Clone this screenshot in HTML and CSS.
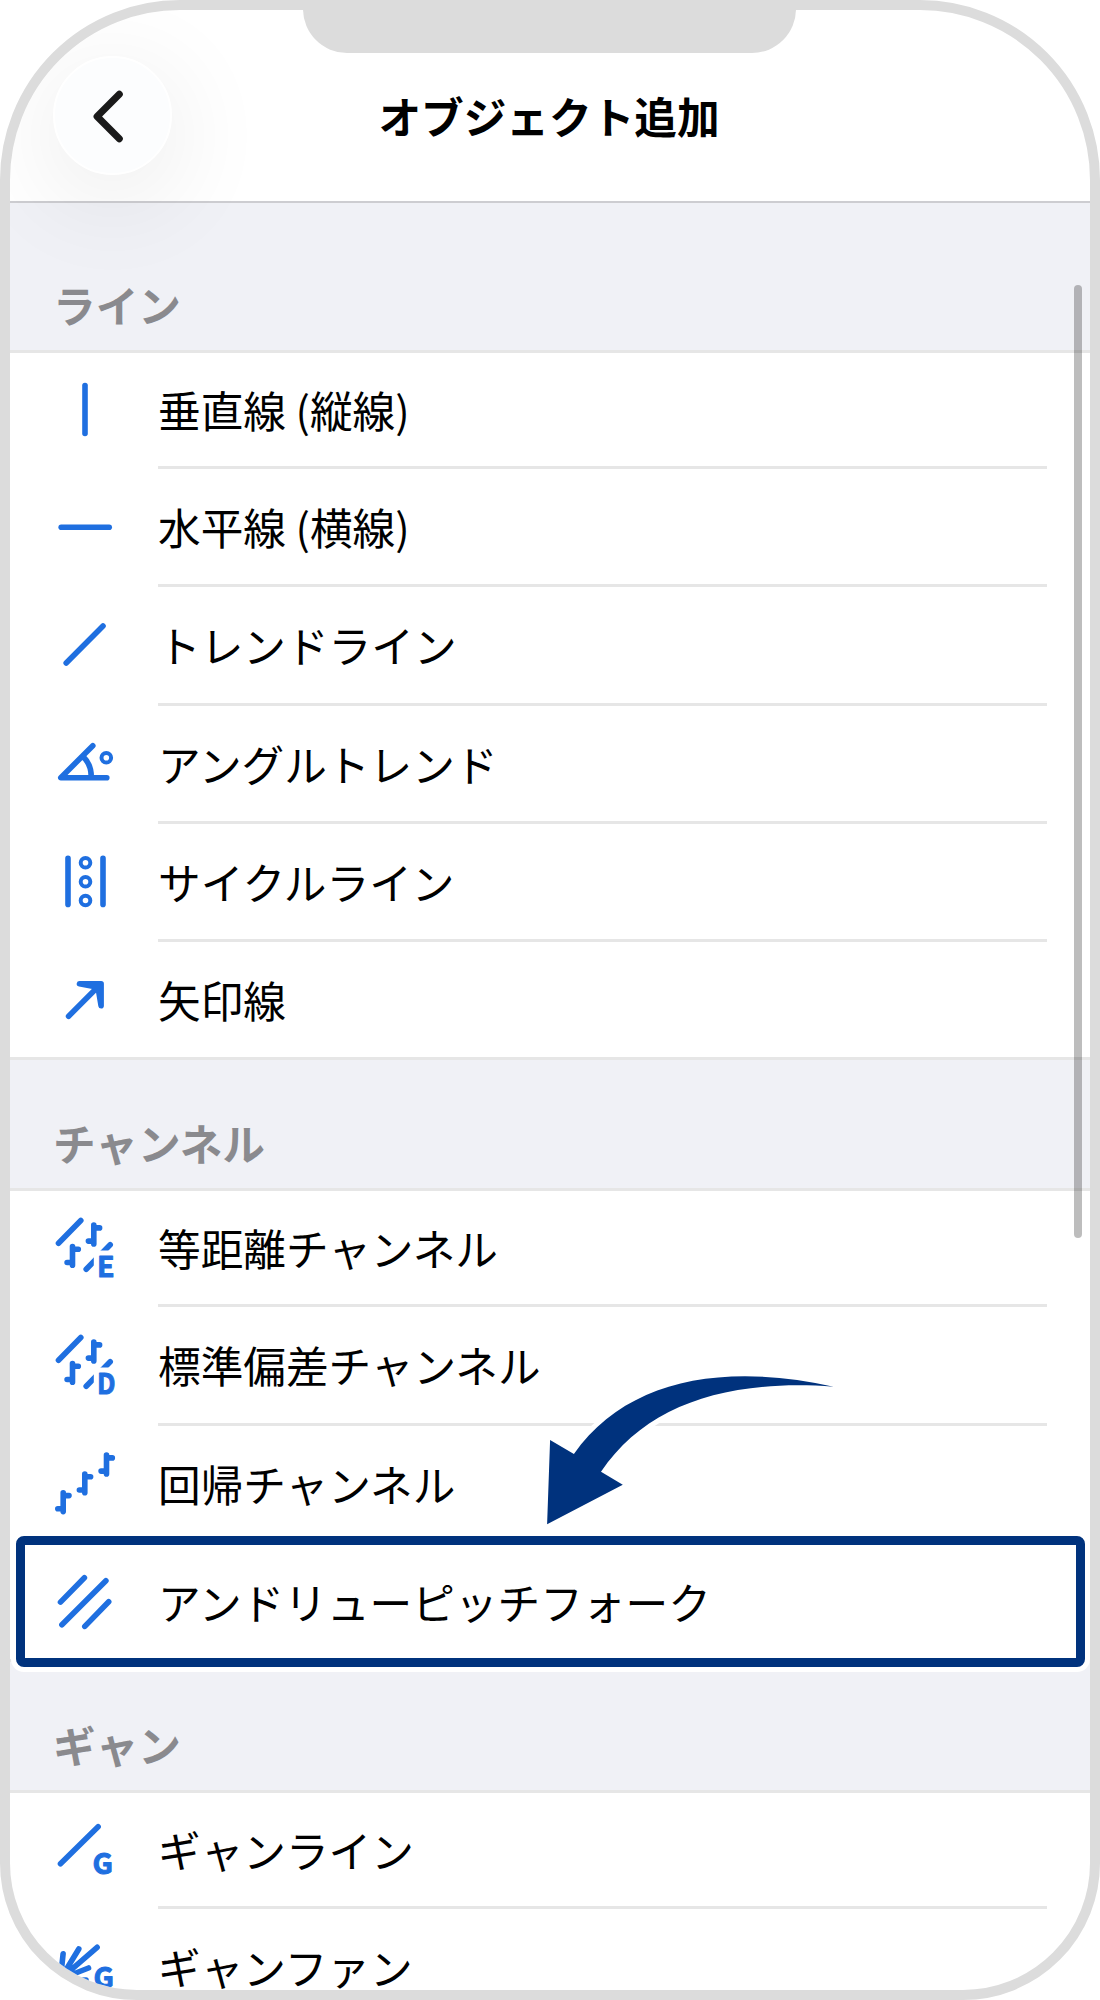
FILE: index.html
```html
<!DOCTYPE html>
<html lang="ja">
<head>
    <meta charset="UTF-8">
    <meta name="viewport" content="width=device-width, initial-scale=1.0">
    <title>オブジェクト追加</title>
    <link rel="stylesheet" href="styles.css">
</head>
<body>
    <svg class="defs">
        <symbol id="bar" viewBox="0 0 20 28" overflow="visible">
            <path d="M0 0V18.8M0 2.8H5.8M0 16H-5.4"/>
        </symbol>
    </svg>
    <div class="phone">
        <div class="notch"></div>
        <header class="header">
            <button class="back-button" aria-label="戻る">
                <svg viewBox="0 0 119 119"><path d="M66.3 38.3L44.1 60.5L66.3 82.7"/></svg>
            </button>
            <h1>オブジェクト追加</h1>
        </header>
        <main>
            <h2 class="first">ライン</h2>
            <ul>
                <li>
                    <svg class="icon" viewBox="0 0 64 64"><path d="M32 7.5V55.5"/></svg>
                    <span>垂直線 (縦線)</span>
                </li>
                <li>
                    <svg class="icon" viewBox="0 0 64 64"><path d="M8.2 32.3H56.2"/></svg>
                    <span>水平線 (横線)</span>
                </li>
                <li>
                    <svg class="icon" viewBox="0 0 64 64"><path d="M13.2 50L50 13"/></svg>
                    <span>トレンドライン</span>
                </li>
                <li>
                    <svg class="icon" viewBox="0 0 64 64">
                        <path d="M39.8 13.7L7.8 45.7H53.8M30.5 25Q38.6 33 38.2 45.7"/>
                        <circle cx="53.3" cy="25.7" r="4.8"/>
                    </svg>
                    <span>アングルトレンド</span>
                </li>
                <li>
                    <svg class="icon" viewBox="0 0 64 64">
                        <path d="M15 8.4V54.4M50 8.4V54.4"/>
                        <circle cx="32.5" cy="12.7" r="4.8"/>
                        <circle cx="32.5" cy="31.7" r="4.8"/>
                        <circle cx="32.5" cy="50.5" r="4.8"/>
                    </svg>
                    <span>サイクルライン</span>
                </li>
                <li>
                    <svg class="icon" viewBox="0 0 64 64">
                        <path d="M15.6 48.2L43 20.8"/>
                        <path class="solid" d="M26.5 15.8H48.1V37.8L45 19.2Z"/>
                    </svg>
                    <span>矢印線</span>
                </li>
            </ul>
            <h2>チャンネル</h2>
            <ul>
                <li>
                    <svg class="icon" viewBox="-0.7 -0.5 64 64">
                        <path d="M4.8 26.7L27.1 4M32.5 52.7L56.5 28.3"/>
                        <use href="#bar" x="40.1" y="8.6" width="20" height="28"/>
                        <use href="#bar" x="18.8" y="30" width="20" height="28"/>
                        <rect x="40.1" y="34" width="24" height="30"/>
                        <text x="43.4" y="60.5">E</text>
                    </svg>
                    <span>等距離チャンネル</span>
                </li>
                <li>
                    <svg class="icon" viewBox="-0.7 -0.5 64 64">
                        <path d="M4.8 26.7L27.1 4M32.5 52.7L56.5 28.3"/>
                        <use href="#bar" x="40.1" y="8.6" width="20" height="28"/>
                        <use href="#bar" x="18.8" y="30" width="20" height="28"/>
                        <rect x="40.1" y="34" width="24" height="30"/>
                        <text x="43.4" y="60" textLength="18.5" lengthAdjust="spacingAndGlyphs">D</text>
                    </svg>
                    <span>標準偏差チャンネル</span>
                </li>
                <li>
                    <svg class="icon" viewBox="0 0 64 64">
                        <use href="#bar" x="53.5" y="3.1" width="20" height="28"/>
                        <use href="#bar" x="31.8" y="22" width="20" height="28"/>
                        <use href="#bar" x="10.2" y="40.8" width="20" height="28"/>
                    </svg>
                    <span>回帰チャンネル</span>
                    <svg class="pointer" viewBox="0 0 300 160">
                        <path d="M7.1 154.3L10.1 70L33.9 84C86 10 182 -8 293.7 16.7C188 9 107 34 61 101.7L82.8 114.7Z"/>
                    </svg>
                </li>
                <li class="selected">
                    <svg class="icon" viewBox="0 0 64 64"><path d="M7.5 32.1L31.4 7.7M8.9 54.7L52.9 10.7M31.8 56.4L55.7 31.7"/></svg>
                    <span>アンドリューピッチフォーク</span>
                </li>
            </ul>
            <h2>ギャン</h2>
            <ul>
                <li>
                    <svg class="icon" viewBox="0 0 64 64">
                        <path d="M7.5 45.7L45.1 8.7"/>
                        <text x="39.5" y="55.5">G</text>
                    </svg>
                    <span>ギャンライン</span>
                </li>
                <li>
                    <svg class="icon" viewBox="0 0 64 64">
                        <path d="M7.5 44L10.1 18.7M7.5 44L25.8 14M7.5 44L44.1 12.3M7.5 44L35.5 33M7.5 46L33 45"/>
                        <text x="40.5" y="52.5">G</text>
                    </svg>
                    <span>ギャンファン</span>
                </li>
            </ul>
        </main>
        <div class="scrollbar"></div>
    </div>
</body>
</html>
```
FILE: styles.css
```css
:root {
    --color-frame: #dcdcdc;
    --color-section: #f0f1f6;
    --color-line: #e6e6e6;
    --color-heading: #8a8a8e;
    --color-icon: #1f6fe0;
    --color-accent: #00327d;
}

* {
    padding: 0;
    margin: 0;
    box-sizing: border-box;
    font-family: "Noto Sans CJK JP", sans-serif;
}

body {
    background: #fff;
    height: 2000px;
    overflow: hidden;
}

.defs {
    display: none;
}

.phone {
    position: relative;
    width: 1100px;
    height: 2000px;
    border: 10px solid var(--color-frame);
    border-radius: 180px 180px 137px 137px;
    overflow: hidden;
    background: #fff;
}

.notch {
    position: absolute;
    top: -1px;
    left: 293px;
    width: 493px;
    height: 44px;
    border-radius: 0 0 44px 44px;
    background: var(--color-frame);
    z-index: 2;
}

.header {
    position: relative;
    height: 193px;
    border-bottom: 2px solid #cdcdd1;
    display: grid;
    grid-template-columns: 162px 1fr 162px;
    z-index: 1;
}

.back-button {
    width: 119px;
    height: 119px;
    margin: 46px 0 0 43px;
    border: 2px solid #fff;
    border-radius: 50%;
    background: #fcfdfe;
    box-shadow: 0 20px 100px 10px rgba(0, 0, 0, 0.07);
}

.back-button svg {
    display: block;
    width: 119px;
    height: 119px;
    margin: -2px;
    fill: none;
    stroke: #1a1a1a;
    stroke-width: 7;
    stroke-linecap: round;
    stroke-linejoin: round;
}

h1 {
    margin: 74px 1px 0 -1px;
    text-align: center;
    font-size: 42.67px;
    line-height: 64px;
    font-weight: 700;
}

h2 {
    height: 131px;
    padding: 51px 0 0 43px;
    font-size: 42.67px;
    line-height: 64px;
    font-weight: 700;
    color: var(--color-heading);
    background: var(--color-section);
    border-bottom: 3px solid var(--color-line);
}

h2.first {
    height: 150px;
    padding-top: 70px;
}

ul {
    list-style: none;
    border-bottom: 3px solid var(--color-line);
}

li {
    position: relative;
    display: flex;
    align-items: center;
    height: 118.25px;
    padding: 0 43px 0 43px;
}

li:first-child {
    height: 116px;
}

li:last-child {
    margin-bottom: -3px;
}

li span {
    display: flex;
    flex: 1;
    align-items: center;
    height: 100%;
    padding-top: 1px;
    border-bottom: 3px solid var(--color-line);
    font-size: 42.67px;
    line-height: 64px;
    white-space: pre;
    color: #000;
}

li:last-child span,
li:nth-last-child(2):has(+ .selected) span {
    border-color: transparent;
}

.icon {
    width: 64px;
    height: 64px;
    margin: 0 41px 2px 0;
    overflow: visible;
    fill: none;
    stroke: var(--color-icon);
    stroke-width: 5.6;
    stroke-linecap: round;
    stroke-linejoin: round;
}

.icon circle {
    stroke-width: 4;
}

.icon .solid {
    fill: var(--color-icon);
}

.icon rect {
    fill: #fff;
    stroke: none;
}

.icon text {
    fill: var(--color-icon);
    stroke-width: 1;
    font-size: 28.5px;
    font-weight: 700;
}

/* highlighted row */
.selected::after {
    content: "";
    position: absolute;
    top: -8px;
    left: 5.5px;
    right: 5.5px;
    height: 131px;
    box-sizing: border-box;
    border: 9px solid var(--color-accent);
    border-radius: 8px;
    box-shadow: 0 0 0 5px #fff;
    z-index: 1;
}

.pointer {
    position: absolute;
    left: 530px;
    top: -56px;
    width: 300px;
    height: 160px;
    fill: var(--color-accent);
    stroke: #fff;
    stroke-width: 10;
    paint-order: stroke;
    z-index: 1;
}

.scrollbar {
    position: absolute;
    top: 275px;
    right: 8px;
    width: 8px;
    height: 953px;
    border-radius: 4px;
    background: rgba(0, 0, 0, 0.26);
}
```
